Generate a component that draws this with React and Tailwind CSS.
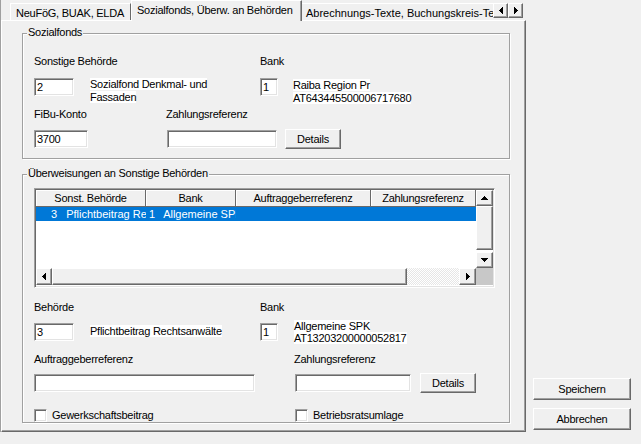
import React from 'react';

const sunken =
  'bg-white border border-t-[#a0a0a0] border-l-[#a0a0a0] border-r-white border-b-white shadow-[inset_1px_1px_0_#696969,inset_-1px_-1px_0_#e3e3e3]';
const raised =
  'bg-[#f0f0f0] border border-t-white border-l-white border-r-[#696969] border-b-[#696969] shadow-[inset_-1px_-1px_0_#a0a0a0]';

const arrows = {
  up: { vb: '0 0 7 4', w: 7, h: 4, d: 'M3 0h1v1H3zM2 1h3v1H2zM1 2h5v1H1zM0 3h7v1H0z' },
  down: { vb: '0 0 7 4', w: 7, h: 4, d: 'M0 0h7v1H0zM1 1h5v1H1zM2 2h3v1H2zM3 3h1v1H3z' },
  left: { vb: '0 0 4 7', w: 4, h: 7, d: 'M3 0h1v7H3zM2 1h1v5H2zM1 2h1v3H1zM0 3h1v1H0z' },
  right: { vb: '0 0 4 7', w: 4, h: 7, d: 'M0 0h1v7H0zM1 1h1v5H1zM2 2h1v3H2zM3 3h1v1H3z' },
};

function Arrow({ dir }) {
  const a = arrows[dir];
  return (
    <svg width={a.w} height={a.h} viewBox={a.vb} shapeRendering="crispEdges">
      <path d={a.d} fill="#000" />
    </svg>
  );
}

function ArrowButton({ dir, className = '' }) {
  return (
    <div className={`${raised} flex items-center justify-center ${className}`}>
      <Arrow dir={dir} />
    </div>
  );
}

function Input({ value, className = '' }) {
  return (
    <div className={`${sunken} h-[18px] shrink-0 pl-[2px] leading-[16px] ${className}`}>{value}</div>
  );
}

function Button({ children, className = '' }) {
  return (
    <button className={`${raised} flex shrink-0 items-center justify-center leading-[13px] ${className}`}>
      {children}
    </button>
  );
}

function Checkbox({ label, className = '' }) {
  return (
    <div className={`flex items-center ${className}`}>
      <div className={`${sunken} h-[13px] w-[13px] shrink-0`} />
      <span className="ml-[5px] leading-[13px]">{label}</span>
    </div>
  );
}

function Group({ title, className = '', children }) {
  return (
    <div
      className={`relative border border-[#a0a0a0] shadow-[inset_1px_1px_0_#fff,1px_1px_0_#fff] ${className}`}
    >
      <span className="absolute left-[4px] top-[-8px] bg-[#f0f0f0] px-px leading-[13px]">{title}</span>
      {children}
    </div>
  );
}

function Hl({ lines, className = '' }) {
  return (
    <div className={className}>
      {lines.map((l) => (
        <div key={l}>
          <span className="bg-white">{l}</span>
        </div>
      ))}
    </div>
  );
}

const columns = [
  { title: 'Sonst. Behörde', w: 'w-[110px]' },
  { title: 'Bank', w: 'w-[90px]' },
  { title: 'Auftraggeberreferenz', w: 'w-[135px]' },
  { title: 'Zahlungsreferenz', w: 'w-[105px]' },
];

function ListView() {
  return (
    <div className={`${sunken} flex h-[100px] w-[461px] flex-col`}>
      <div className="flex h-[79px] pl-px pt-px">
        <div className="flex w-[440px] flex-col">
          <div className="flex h-[17px] bg-[#f0f0f0]">
            {columns.map((c) => (
              <div
                key={c.title}
                className={`${c.w} h-[17px] shrink-0 border-r border-b border-r-[#696969] border-b-[#696969] text-center leading-[16px] shadow-[inset_1px_1px_0_#fff]`}
              >
                {c.title}
              </div>
            ))}
          </div>
          <div className="flex-1 bg-white">
            <div className="flex h-[14px] bg-[#0078d7] leading-[14px] tracking-normal text-white">
              <div className="w-[110px] shrink-0 overflow-hidden whitespace-nowrap pl-[15px]">
                3<span className="ml-[9px]">Pflichtbeitrag Rechtsanwälte</span>
              </div>
              <div className="w-[90px] shrink-0 overflow-hidden whitespace-nowrap pl-[3px]">
                1<span className="ml-[8px]">Allgemeine SPK</span>
              </div>
            </div>
          </div>
        </div>
        <div className="flex w-[17px] flex-col bg-[#f0f0f0]">
          <ArrowButton dir="up" className="h-[16px]" />
          <div className={`${raised} h-[45px]`} />
          <div className="h-[2px] bg-white" />
          <ArrowButton dir="down" className="h-[16px]" />
        </div>
      </div>
      <div className="flex h-[17px] pl-px">
        <ArrowButton dir="left" className="w-[16px]" />
        <div className={`${raised} w-[355px]`} />
        <div className="w-[52px] bg-[repeating-conic-gradient(#fff_0_25%,#e6e6e6_0_50%)] bg-[length:2px_2px]" />
        <ArrowButton dir="right" className="w-[17px]" />
        <div className="w-[17px] bg-[#c8c8c8]" />
      </div>
    </div>
  );
}

export default function App() {
  return (
    <div className="flex h-[444px] w-[641px] overflow-hidden bg-[#f0f0f0] font-['Liberation_Sans',Arial,sans-serif] text-[11px] tracking-[-0.25px] text-black">
      <div className="flex h-[432px] w-[526px] flex-col border-l border-l-[#a0a0a0]">
        <div className="flex h-[20px] items-end pl-[9px]">
          <div className="h-[17px] w-[121px] shrink-0 border-t border-l border-r border-t-white border-l-white border-r-[#696969] pl-[5px] pt-[3px] leading-[13px]">
            NeuFöG, BUAK, ELDA
          </div>
          <div className="relative z-10 -mb-px h-[21px] w-[171px] shrink-0 border-t border-l border-r border-t-white border-l-white border-r-[#696969] bg-[#f0f0f0] pl-[5px] pt-[3px] leading-[13px] shadow-[inset_-1px_0_0_#a0a0a0]">
            Sozialfonds, Überw. an Behörden
          </div>
          <div className="h-[17px] w-[191px] shrink-0 overflow-hidden whitespace-nowrap border-t border-t-white pl-[4px] pt-[3px] leading-[13px] tracking-normal">
            Abrechnungs-Texte, Buchungskreis-Texte
          </div>
          <div className="mt-[3px] flex self-start">
            <ArrowButton dir="left" className="h-[15px] w-[15px]" />
            <ArrowButton dir="right" className="h-[15px] w-[15px]" />
          </div>
        </div>

        <div className="flex-1 border border-t-white border-l-white border-r-[#696969] border-b-[#696969] shadow-[inset_-1px_-1px_0_#a0a0a0]">
          <Group title="Sozialfonds" className="ml-[20px] mt-[12px] h-[126px] w-[488px]">
            <div className="flex flex-col pl-[11px]">
              <div className="mt-[21px] flex h-[13px] leading-[13px]">
                <div className="w-[226px]">Sonstige Behörde</div>
                <div>Bank</div>
              </div>
              <div className="mt-[10px] flex h-[26px]">
                <div className="flex w-[226px] items-start">
                  <Input value="2" className="w-[40px]" />
                  <Hl lines={['Sozialfond Denkmal- und', 'Fassaden']} className="ml-[16px] leading-[13px]" />
                </div>
                <div className="flex items-start">
                  <Input value="1" className="w-[18px]" />
                  <Hl
                    lines={['Raiba Region Pr', 'AT643445500006717680']}
                    className="ml-[15px] mt-px leading-[12.5px]"
                  />
                </div>
              </div>
              <div className="mt-[4px] flex h-[13px] leading-[13px]">
                <div className="w-[132px]">FiBu-Konto</div>
                <div>Zahlungsreferenz</div>
              </div>
              <div className="mt-[8px] flex h-[20px] items-center">
                <Input value="3700" className="w-[54px]" />
                <Input className="ml-[79px] w-[110px]" />
                <Button className="ml-[8px] h-[20px] w-[56px]">Details</Button>
              </div>
            </div>
          </Group>

          <Group
            title="Überweisungen an Sonstige Behörden"
            className="ml-[20px] mt-[15px] h-[249px] w-[488px]"
          >
            <div className="flex flex-col pl-[11px]">
              <div className="mt-[13px]">
                <ListView />
              </div>
              <div className="mt-[13px] flex h-[13px] leading-[13px]">
                <div className="w-[226px]">Behörde</div>
                <div>Bank</div>
              </div>
              <div className="mt-[9px] flex h-[18px]">
                <div className="flex w-[226px] items-start">
                  <Input value="3" className="w-[40px]" />
                  <Hl lines={['Pflichtbeitrag Rechtsanwälte']} className="ml-[16px] mt-[2px] leading-[13px]" />
                </div>
                <div className="flex items-start">
                  <Input value="1" className="w-[18px]" />
                  <Hl
                    lines={['Allgemeine SPK', 'AT13203200000052817']}
                    className="ml-[16px] mt-[-2px] leading-[11.5px]"
                  />
                </div>
              </div>
              <div className="mt-[12px] flex h-[13px] leading-[13px]">
                <div className="w-[260px]">Auftraggeberreferenz</div>
                <div>Zahlungsreferenz</div>
              </div>
              <div className="mt-[7px] flex h-[20px] items-center">
                <Input className="w-[221px]" />
                <Input className="ml-[40px] w-[116px]" />
                <Button className="ml-[9px] h-[20px] w-[56px]">Details</Button>
              </div>
              <div className="mt-[16px] flex h-[13px]">
                <Checkbox label="Gewerkschaftsbeitrag" className="w-[261px]" />
                <Checkbox label="Betriebsratsumlage" />
              </div>
            </div>
          </Group>
        </div>
      </div>

      <div className="flex flex-1 flex-col justify-end gap-[8px] pb-[14px] pl-[7px]">
        <Button className="h-[22px] w-[98px]">Speichern</Button>
        <Button className="h-[22px] w-[98px]">Abbrechen</Button>
      </div>
    </div>
  );
}
